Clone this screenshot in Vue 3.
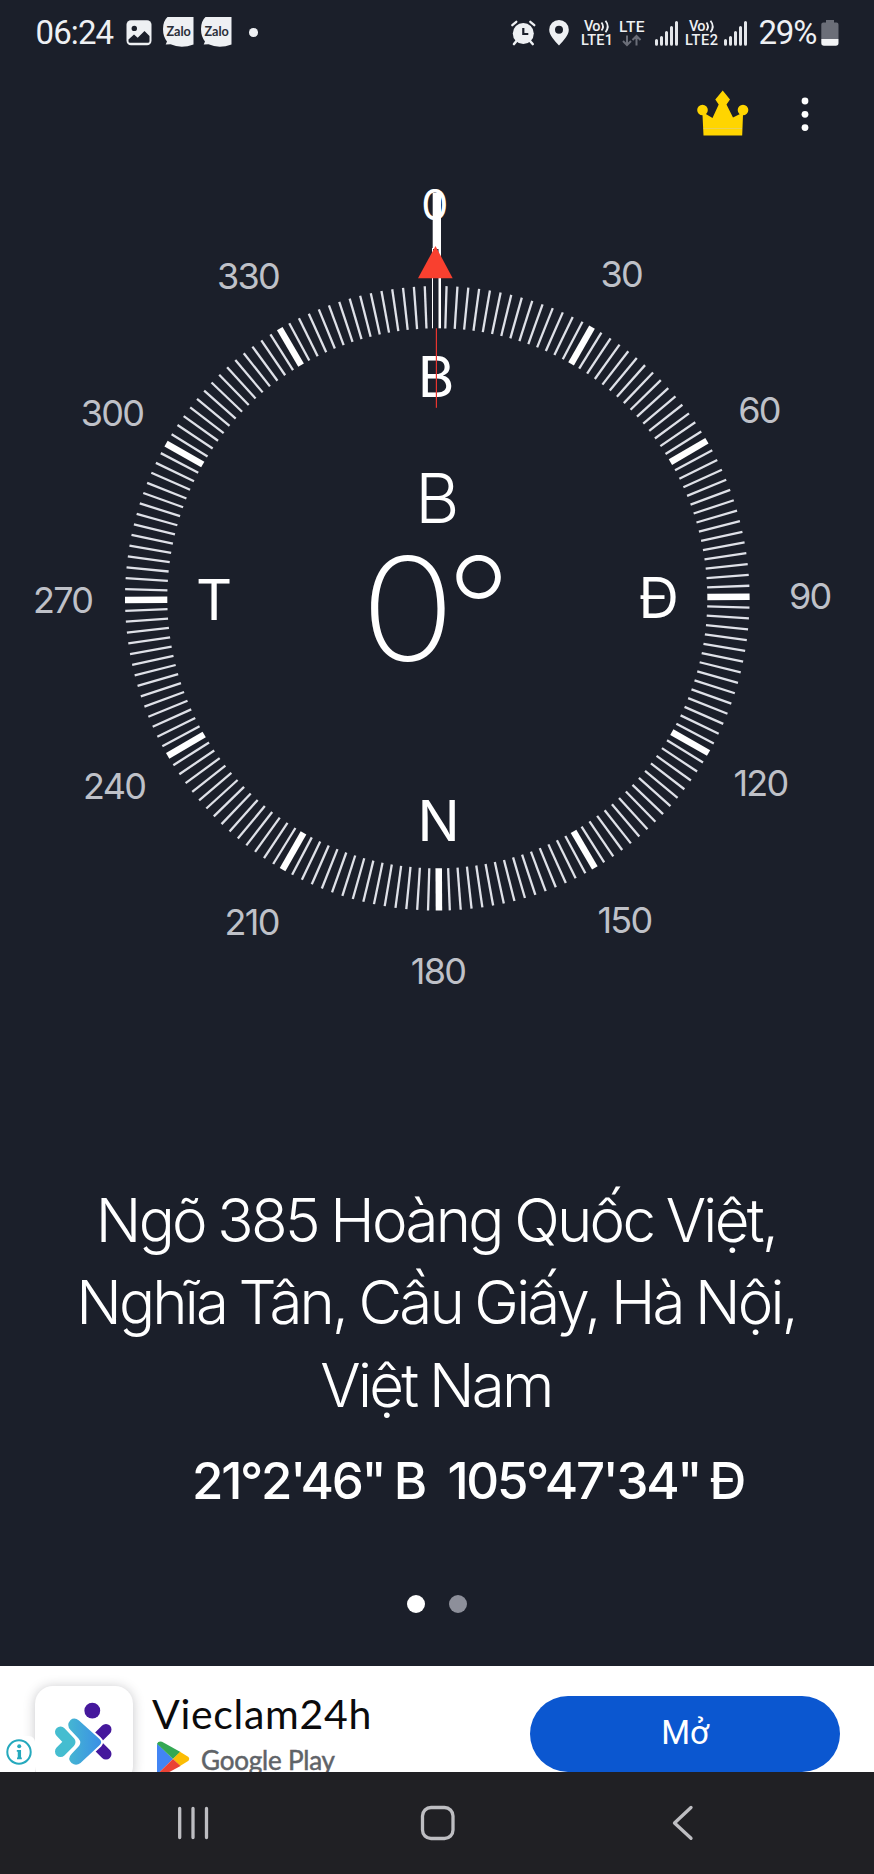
<script setup>
const ticks = Array.from({ length: 179 }, (_, i) => (i + 1) * 2)

const labels = [
  { t: '30', x: 621.2, y: 286.8 },
  { t: '60', x: 759, y: 422.8 },
  { t: '90', x: 809.7, y: 609 },
  { t: '120', x: 760.5, y: 795.8 },
  { t: '150', x: 624.5, y: 933.3 },
  { t: '180', x: 438, y: 984.3 },
  { t: '210', x: 251.7, y: 935 },
  { t: '240', x: 114.2, y: 798.5 },
  { t: '270', x: 62.7, y: 612.8 },
  { t: '300', x: 112, y: 426 },
  { t: '330', x: 248, y: 288.5 },
]

const points = [
  { t: 'B', x: 436, y: 396.5 },
  { t: 'Đ', x: 658.6, y: 617.5 },
  { t: 'N', x: 438.5, y: 840.7 },
  { t: 'T', x: 214.2, y: 620 },
]
</script>

<template>
  <div class="screen">
    <header class="status">
      <span class="clock">06:24</span>
      <svg class="i-image" width="26" height="26" viewBox="0 0 26 26">
        <rect x="0.5" y="0.3" width="25" height="25" rx="4.5" fill="#eef0f3" />
        <circle cx="8.3" cy="8.4" r="2.7" fill="#1b1f2a" />
        <path d="M2.5 19.5 8 14.5l3.7 3.2 6.8-6.700 5 5v5.200q0 1.600-1.600 1.600H4.100q-1.600 0-1.600-1.600z" fill="#1b1f2a" />
      </svg>
      <svg v-for="n in 2" :key="n" class="i-zalo" width="31" height="30" viewBox="0 0 31 30">
        <path d="M4.500 0H30.500V27.500Q18 32 7.500 27.300L2.700 27.600 4 24.500Q0 19.500 0 12 0 4 4.500 0z" fill="#eef0f3" />
        <text x="3.400" y="18.600" class="zalo" textLength="24.500" lengthAdjust="spacingAndGlyphs">Zalo</text>
      </svg>
      <i class="more-dot"></i>
      <span class="spacer"></span>
      <svg class="i-alarm" width="25" height="26" viewBox="0 0 25 26">
        <g stroke="#eef0f3" stroke-linecap="round" fill="none">
          <path d="M1.300 5.200 5.300 1.800M23.300 5.200 19.300 1.800" stroke-width="2.300" />
          <path d="M5.500 21 3 24M19 21l2.700 3" stroke-width="2.600" />
        </g>
        <circle cx="12.300" cy="13.500" r="10.500" fill="#eef0f3" />
        <path d="M12.300 8v6h5" stroke="#1b1f2a" stroke-width="2.200" fill="none" />
      </svg>
      <svg class="i-pin" width="20" height="26" viewBox="0 0 20 26">
        <path fill-rule="evenodd" d="M10 0a9.800 9.800 0 0 1 9.800 9.800C19.800 15.500 14 21 10 25.600 6 21 .2 15.500.2 9.800A9.800 9.800 0 0 1 10 0zm0 5.800a4 4 0 1 0 0 8 4 4 0 0 0 0-8z" fill="#eef0f3" />
      </svg>
      <svg class="i-vo1" width="33" height="28" viewBox="0 0 33 28">
        <text x="3" y="12.300" class="net" textLength="16.500">Vo</text>
        <path d="M20.500 3.500q3 4 0 8M24.500 1.800q4.500 5.700 0 11.500" class="wave" />
        <text x="0" y="26.300" class="net" textLength="32">LTE1</text>
      </svg>
      <svg class="i-lte" width="26" height="28" viewBox="0 0 26 28">
        <text x="0" y="13" class="net big" textLength="25.500">LTE</text>
        <path d="M8 16.500v9.500M4 22l4 4 4-4M17.500 26.500V17M13.500 21l4-4 4 4" stroke="#6b6e78" stroke-width="2" fill="none" />
      </svg>
      <svg class="i-sig1" width="24" height="26" viewBox="0 0 24 26">
        <path d="M1.500 20.500v3.700M6.500 17.500v6.700M11.500 12.500v11.700M16.500 7.500v16.700M21.500 2.500v21.700" class="bars" />
      </svg>
      <svg class="i-vo2" width="33" height="28" viewBox="0 0 33 28">
        <text x="4" y="12.300" class="net" textLength="16.500">Vo</text>
        <path d="M21.500 3.500q3 4 0 8M25.500 1.800q4.500 5.700 0 11.500" class="wave" />
        <text x="0" y="26.300" class="net" textLength="33">LTE2</text>
      </svg>
      <svg class="i-sig2" width="24" height="26" viewBox="0 0 24 26">
        <path d="M1.500 20.500v3.700M6.500 17.500v6.700M11.500 12.500v11.700M16.500 7.500v16.700M21.500 2.500v21.700" class="bars" />
      </svg>
      <span class="percent">29%</span>
      <svg class="i-batt" width="18" height="26" viewBox="0 0 18 26">
        <path d="M5 0h8v2.500h2.500q2 0 2 2V19H.3V4.500q0-2 2-2H5z" fill="#6b6e78" />
        <path d="M.3 19h17.200v4q0 2.700-2.700 2.700H3Q.3 25.700.3 23z" fill="#f2f3f5" />
      </svg>
    </header>

    <div class="toolbar">
      <svg class="crown" width="52" height="46" viewBox="0 0 52 46">
        <g fill="#ffd500">
          <circle cx="5.500" cy="20" r="5.300" />
          <circle cx="46" cy="20" r="5.300" />
          <path d="M25.700.5 33 9.500 29.500 14.500 36 27.500 44 23.500 46 25 45.200 45.500H6.500L5.500 25 8 23.500 15.500 28 21.700 14.500 18.300 9.500z" />
        </g>
        <path d="M6.500 38.500H45" stroke="#e6cf6a" stroke-width="0.800" />
      </svg>
      <svg class="kebab" width="8" height="36" viewBox="0 0 8 36" fill="#fff">
        <circle cx="4" cy="4" r="3.400" /><circle cx="4" cy="17.300" r="3.400" /><circle cx="4" cy="30.600" r="3.400" />
      </svg>
    </div>

    <svg class="compass" width="874" height="850" viewBox="0 160 874 850">
      <g transform="rotate(-0.3 437.3 598.3)">
        <line
          v-for="a in ticks"
          :key="a"
          x1="437.3" x2="437.3" y1="286" y2="328.300"
          :class="a % 30 === 0 ? 'major' : 'minor'"
          :transform="`rotate(${a} 437.3 598.3)`"
        />
      </g>
      <text v-for="l in labels" :key="l.t" :x="l.x" :y="l.y" class="deg">{{ l.t }}</text>
      <text x="434.700" y="219.500" class="zero">0</text>
      <rect x="432.700" y="193" width="8.300" height="56" fill="#fff" />
      <rect x="432" y="248" width="1" height="80.300" fill="#fff" />
      <rect x="438.500" y="248" width="2.500" height="80.300" fill="#fff" />
      <path d="M435.500 246 452.700 278.300H418z" fill="#f9402f" />
      <text v-for="p in points" :key="p.t" :x="p.x" :y="p.y" class="point">{{ p.t }}</text>
      <rect x="435.800" y="328.300" width="1.200" height="79.500" fill="#e8352f" />
      <text x="437.300" y="522.700" class="heading">B</text>
      <text transform="translate(407.800 661) scale(1.085 1)" class="angle">0</text>
      <text x="478.500" y="661" class="angle ring">°</text>
    </svg>

    <section class="place">
      <p class="l1">Ngõ 385 Hoàng Quốc Việt,</p>
      <p class="l2">Nghĩa Tân, Cầu Giấy, Hà Nội,</p>
      <p class="l3">Việt Nam</p>
    </section>
    <div class="coords"><span>21°2'46" B</span><span class="east">105°47'34" Đ</span></div>
    <div class="pager"><i class="on"></i><i></i></div>

    <section class="ad">
      <div class="logo">
        <svg width="98" height="98" viewBox="35 1686 98 98">
          <defs>
            <linearGradient id="g" x1="0" x2="1"><stop offset="0" stop-color="#45b6d2" /><stop offset="1" stop-color="#3a8fe6" /></linearGradient>
          </defs>
          <circle cx="92.300" cy="1710.700" r="7.900" fill="#45189c" />
          <path d="M106 1729.500 93 1742.500M93 1741l13 13" stroke="#45189c" stroke-width="11" stroke-linecap="round" />
          <path d="M60.500 1732 70 1742 60.500 1751.500" stroke="#45bdd0" stroke-width="11" stroke-linecap="round" stroke-linejoin="round" fill="none" />
          <path d="M70.500 1720q4-3 8.500.5l20.500 18.500q3.200 3 .3 6L80.500 1763q-4.500 3.500-9 0-4.500-4.500 0-9l7-7.500q3.500-4 0-8l-8-8.500q-4.500-5 0-10z" fill="url(#g)" stroke="#fff" stroke-width="4" paint-order="stroke" />
        </svg>
      </div>
      <div class="info">
        <svg width="28" height="28" viewBox="0 0 28 28">
          <circle cx="14" cy="14" r="11.700" fill="none" stroke="#25a9bd" stroke-width="2" />
          <circle cx="14.200" cy="8.300" r="2" fill="#25a9bd" />
          <path d="M11.800 12.800H14M12 20.300h4.800" stroke="#25a9bd" stroke-width="1.800" fill="none" />
          <path d="M14.400 12v9" stroke="#25a9bd" stroke-width="3.300" />
        </svg>
      </div>
      <div class="copy">
        <div class="name">Vieclam24h</div>
        <div class="store">
          <svg width="33" height="36" viewBox="0 0 33 36">
            <path d="M0 2.500V33.500L16 18z" fill="#4285f4" />
            <path d="M0 2.800Q1.500-.5 5 .8L23.500 11 16 18z" fill="#34a853" />
            <path d="M23 10.800 31.500 16q1.500 1.800 0 3.800L23 25l-7-7z" fill="#fbbc04" />
            <path d="M0 33.500 16 18l7.500 7L5 35q-3.500 1.200-5-1.500z" fill="#ea4335" />
          </svg>
          <span>Google Play</span>
        </div>
      </div>
      <button class="open">Mở</button>
    </section>

    <nav class="nav">
      <svg width="32" height="34" viewBox="0 0 32 34"><path d="M2.700 2.500v29M16 2.500v29M29.500 2.500v29" class="n" /></svg>
      <svg width="36" height="36" viewBox="0 0 36 36"><rect x="2.500" y="2.500" width="30.500" height="31" rx="8.500" class="n" /></svg>
      <svg width="22" height="36" viewBox="0 0 22 36"><path d="M19 2.500 2.500 18 19 33.300" class="n" /></svg>
    </nav>
  </div>
</template>

<style scoped>
.screen { width: 874px; height: 1874px; overflow: hidden; background: #1b1f2a; color: #fff; font-family: Inter, "Liberation Sans", sans-serif; display: flex; flex-direction: column; }
.status { height: 64px; flex: none; display: flex; align-items: flex-start; padding: 0 35.500px; box-sizing: border-box; }
.status svg { display: block; flex: none; overflow: visible; }
.clock, .percent { font-family: Roboto, sans-serif; font-size: 33px; line-height: 40px; color: #eef0f3; margin-top: 12.500px; }
.clock { width: 79px; letter-spacing: -0.900px; }
.i-image { margin: 20px 0 0 11.500px; }
.i-zalo { margin: 17px 0 0 11px; }
.i-zalo + .i-zalo { margin-left: 7px; }
.zalo { font: 700 12.500px Lato, sans-serif; fill: #2a2d38; }
.more-dot { width: 8.600px; height: 8.600px; border-radius: 50%; background: #eef0f3; margin: 28.300px 0 0 17px; }
.spacer { flex: 1; }
.i-alarm { margin-top: 20px; }
.i-pin { margin: 20px 0 0 12.500px; }
.i-vo1 { margin: 19px 0 0 12.500px; }
.i-lte { margin: 19px 0 0 5px; }
.i-sig1 { margin: 20px 0 0 9.500px; }
.i-vo2 { margin: 19px 0 0 6px; }
.i-sig2 { margin: 20px 0 0 6.500px; }
.percent { margin-left: 10.500px; width: 58px; letter-spacing: -1.200px; white-space: nowrap; }
.i-batt { margin: 20px 0 0 4px; }
.net { font: 500 14.500px Roboto, sans-serif; fill: #eef0f3; }
.big { font-size: 15.500px; }
.wave { fill: none; stroke: #eef0f3; stroke-width: 1.800; }
.bars { stroke: #e4e6ea; stroke-width: 3; stroke-linecap: round; }

.toolbar { height: 96px; flex: none; display: flex; justify-content: flex-end; padding-right: 65px; }
.crown { margin-top: 26px; }
.kebab { margin: 32.500px 0 0 52px; }

.compass { flex: none; display: block; }
.major { stroke: #fff; stroke-width: 6.500; }
.minor { stroke: #dfe1e8; stroke-width: 2.300; }
.compass text { text-anchor: middle; fill: #fff; }
.compass .deg { font-size: 36px; fill: #bfc1c8; letter-spacing: -1.700px; }
.compass .zero { font-size: 43px; font-weight: 400; }
.compass .point { font-size: 56px; }
.compass .heading { font-size: 68px; font-weight: 300; }
.compass .angle { font-size: 144.500px; font-weight: 250; }

.place { flex: none; margin-top: 168.500px; height: 268.500px; }
.place p { margin: 0 2px 0 0; font-size: 60px; font-weight: 300; line-height: 82.700px; text-align: center; white-space: nowrap; letter-spacing: -2.700px; word-spacing: -1.800px; }
.place .l2 { letter-spacing: -2.800px; }
.coords { flex: none; height: 68px; margin: 0 0 0 192px; display: flex; gap: 22.500px; font-size: 51px; font-weight: 500; line-height: 68px; white-space: nowrap; letter-spacing: -2.300px; word-spacing: -2px; }
.pager { flex: none; margin-top: 80px; height: 71px; display: flex; justify-content: center; gap: 24px; padding-right: 1px; }
.pager i { width: 18px; height: 18px; border-radius: 50%; background: #8d8f9a; }
.pager .on { background: #fff; }

.ad { flex: none; height: 106px; overflow: hidden; background: #fff; display: flex; position: relative; color: #0b0b0c; }
.logo { width: 98px; height: 98px; margin: 20px 0 0 35px; border-radius: 18px; background: #fff; box-shadow: 0 1px 12px rgba(30, 30, 45, 0.250); flex: none; }
.logo svg, .info svg { display: block; }
.info { position: absolute; left: 0; top: 70px; width: 35px; height: 36px; background: #fff; border-radius: 0 6px 0 0; }
.info svg { margin: 2px 0 0 5px; }
.copy { margin: 24px 0 0 19px; width: 378px; flex: none; }
.name { font-family: Lato, sans-serif; font-size: 41px; line-height: 48px; letter-spacing: 0.700px; white-space: nowrap; }
.store { display: flex; margin: 3px 0 0 5px; }
.store span { font-family: Lato, sans-serif; font-size: 26px; line-height: 32px; color: #5f6368; margin: 3px 0 0 11px; white-space: nowrap; letter-spacing: -0.200px; -webkit-text-stroke: 0.500px #5f6368; }
.open { width: 310px; height: 76px; margin: 30px 0 0; padding: 0 0 3px; border: 0; border-radius: 38px; background: #0b57d0; color: #fff; font: 400 33px Roboto, sans-serif; flex: none; }
.nav { flex: none; height: 102px; background: #202024; display: flex; align-items: center; }
.nav svg { display: block; }
.nav svg:nth-child(1) { margin-left: 177px; }
.nav svg:nth-child(2) { margin-left: 211px; }
.nav svg:nth-child(3) { margin-left: 216px; }
.n { fill: none; stroke: #bebec2; stroke-width: 3.300; stroke-linecap: round; stroke-linejoin: round; }
</style>

<style>
body { margin: 0; background: #1b1f2a; }
</style>
